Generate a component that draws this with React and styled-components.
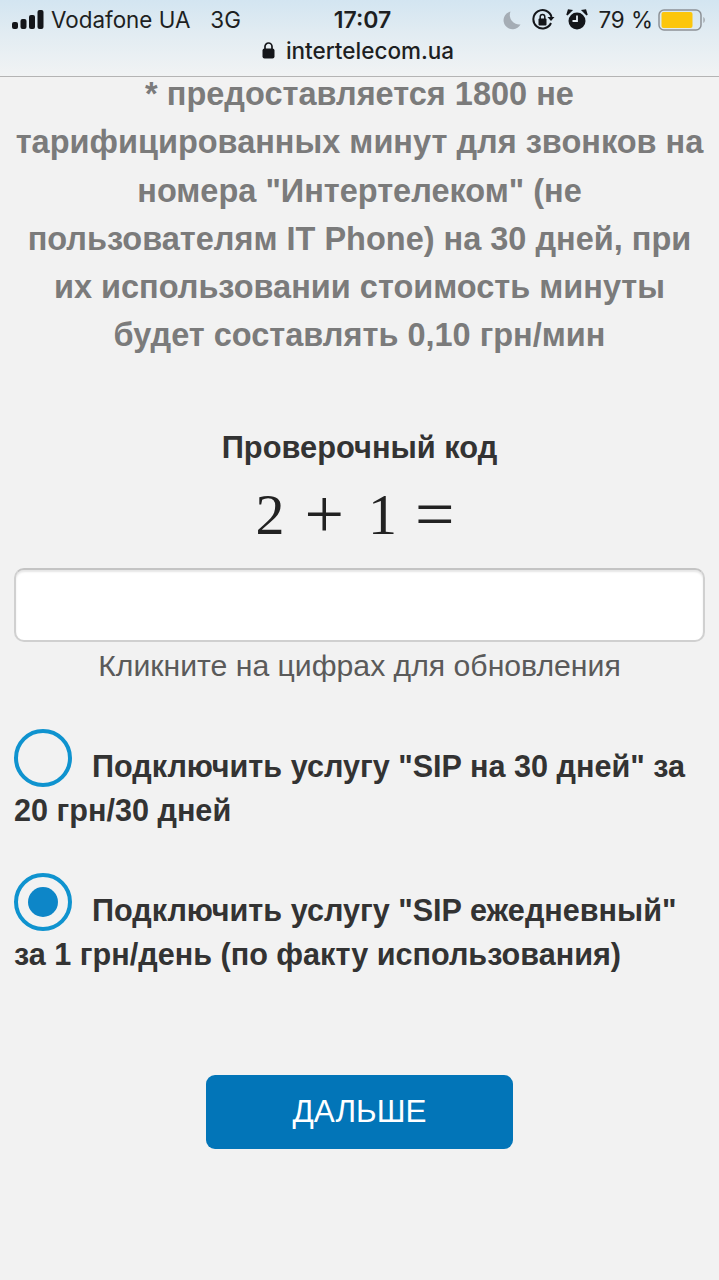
import React from 'react';
import styled, { createGlobalStyle } from 'styled-components';

const GlobalStyle = createGlobalStyle`
  html, body {
    margin: 0;
    padding: 0;
    background: #f2f2f2;
  }
  * {
    box-sizing: border-box;
  }
`;

const Page = styled.div`
  width: 719px;
  height: 1280px;
  overflow: hidden;
  background: #f2f2f2;
  font-family: "Liberation Sans", Arial, sans-serif;
`;

// Status bar + address line of the phone browser
const TopBar = styled.header`
  position: relative;
  z-index: 1;
  height: 77px;
  padding: 0 6px 0 12px;
  background: linear-gradient(180deg, #d3e5f1 0%, #e2ecf2 45%, #f1f3f4 100%);
  border-bottom: 1px solid #b4b4b4;
  font-family: "Inter", "Liberation Sans", sans-serif;
  color: #1d1f22;
`;

const StatusRow = styled.div`
  display: grid;
  grid-template-columns: 1fr auto 1fr;
  align-items: center;
  height: 39px;
`;

const StatusLeft = styled.div`
  display: flex;
  align-items: center;
  gap: 7px;
  font-size: 22.400px;
`;

const Carrier = styled.span`
  margin-right: 13px;
`;

const Clock = styled.div`
  font-size: 23px;
  font-weight: 600;
`;

const StatusRight = styled.div`
  display: flex;
  align-items: center;
  justify-content: flex-end;
  font-size: 22.400px;
  padding-right: 8px;
`;

const Percent = styled.span`
  margin: 0 5px 0 10px;
`;

const AddressRow = styled.div`
  display: flex;
  align-items: center;
  justify-content: center;
  gap: 11px;
  margin-top: -6px;
  padding-right: 9px;
  height: 34px;
  font-size: 22.500px;
  font-weight: 500;
`;

const Content = styled.main`
  padding: 0 14px;
  text-align: center;
`;

const Notice = styled.p`
  margin: -7px -2px 0;
  font-size: 32.500px;
  line-height: 48.300px;
  font-weight: 700;
  color: #7b7b7b;
`;

const CaptchaTitle = styled.h3`
  margin: 68px 0 0;
  font-size: 30.800px;
  line-height: 40px;
  font-weight: 700;
  color: #333;
`;

const CaptchaMath = styled.div`
  display: flex;
  justify-content: center;
  align-items: baseline;
  height: 60px;
  margin-top: 13px;
  padding-right: 9px;
  font-family: "Liberation Serif", serif;
  font-size: 58px;
  line-height: 60px;
  color: #222;
  cursor: pointer;
`;

// + and = are much wider than the digits in the captcha picture
const MathOperator = styled.span`
  font-size: 70px;
  line-height: 60px;
  margin: 0 ${(p) => p.$after}px 0 ${(p) => p.$before}px;
  position: relative;
  top: 4px;
`;

const CaptchaInput = styled.input`
  display: block;
  width: 100%;
  height: 74px;
  margin-top: 27px;
  background: #fff;
  border: 2px solid #d0d0d0;
  border-top-color: #c4c4c4;
  border-radius: 10px;
  box-shadow: inset 0 2px 2px rgba(0, 0, 0, 0.1);
`;

const Hint = styled.div`
  margin-top: 7px;
  font-size: 30.200px;
  line-height: 34px;
  color: #5a5a5a;
`;

const Options = styled.div`
  display: flex;
  flex-direction: column;
  gap: 40px;
  margin-top: 46px;
  text-align: left;
`;

const OptionLabel = styled.label`
  display: block;
  font-size: 30.600px;
  line-height: 44.500px;
  font-weight: 700;
  color: #333;
`;

const RadioMark = styled.span`
  display: inline-block;
  position: relative;
  width: 58px;
  height: 58px;
  margin-right: 20px;
  vertical-align: -10px;
  border: 4px solid #0f93cf;
  border-radius: 50%;

  &::after {
    content: '';
    display: ${(p) => (p.$checked ? 'block' : 'none')};
    position: absolute;
    inset: 10px;
    border-radius: 50%;
    background: #0d86c8;
  }
`;

const NextButton = styled.button`
  display: block;
  width: 307px;
  height: 74px;
  margin: 98px auto 0;
  background: #0275b8;
  border: none;
  border-radius: 9px;
  color: #fff;
  font-family: "Liberation Sans", Arial, sans-serif;
  font-size: 31.400px;
  cursor: pointer;
`;

const SignalIcon = () => (
  <svg width="32" height="20" viewBox="0 0 32 20" fill="#14161a">
    <rect x="0" y="12" width="6" height="7" rx="2" />
    <rect x="8.500" y="9" width="6" height="10" rx="2" />
    <rect x="17" y="5" width="6" height="14" rx="2" />
    <rect x="25.500" y="0" width="6" height="19" rx="2" />
  </svg>
);

const MoonIcon = () => (
  <svg width="20" height="20" viewBox="0 0 20 20" fill="#a5adb5" style={{ marginRight: 9 }}>
    <path d="M8.500 1.500 A9 9 0 1 0 18.500 14.500 A9.500 9.500 0 0 1 8.500 1.500 Z" />
  </svg>
);

const RotationLockIcon = () => (
  <svg width="24" height="24" viewBox="0 0 24 24" fill="none" stroke="#14161a" strokeWidth="2">
    <path d="M20 15 A9.200 9.200 0 1 1 20.500 9" />
    <path d="M23.500 9 L20 13 L16.500 9 Z" fill="#14161a" stroke="none" />
    <rect x="7.500" y="10.500" width="8" height="7" rx="1" fill="#14161a" stroke="none" />
    <path d="M9.200 11 V8.800 A2.300 2.300 0 0 1 13.800 8.800 V11" strokeWidth="1.500" />
  </svg>
);

const AlarmIcon = () => (
  <svg width="22" height="22" viewBox="0 0 22 22" style={{ marginLeft: 11 }}>
    <circle cx="11" cy="12" r="8.500" fill="#14161a" />
    <path d="M11 6.500 V12 H6.500" fill="none" stroke="#e6eef3" strokeWidth="1.800" />
    <path d="M1 6 L5.500 1.500 L2.500 1 Z M21 6 L16.500 1.500 L19.500 1 Z" fill="#14161a" stroke="#14161a" strokeWidth="1.500" />
  </svg>
);

const BatteryIcon = () => (
  <svg width="47" height="24" viewBox="0 0 47 24">
    <rect x="1" y="2" width="42" height="20" rx="5" fill="none" stroke="#8d9196" strokeWidth="1.500" />
    <rect x="3.500" y="4" width="31" height="16" rx="2" fill="#fcc60c" />
    <path d="M45.500 9 C47 10 47 14 45.500 15 Z" fill="#8d9196" />
  </svg>
);

const LockIcon = () => (
  <svg width="13" height="17" viewBox="0 0 13 17" fill="#14161a">
    <rect x="0.500" y="6.500" width="12" height="10" rx="2" />
    <path d="M3 7 V4.500 A3.500 3.500 0 0 1 10 4.500 V7" fill="none" stroke="#14161a" strokeWidth="1.700" />
  </svg>
);

export default function App() {
  return (
    <Page>
      <GlobalStyle />
      <TopBar>
        <StatusRow>
          <StatusLeft>
            <SignalIcon />
            <Carrier>Vodafone UA</Carrier>
            <span>3G</span>
          </StatusLeft>
          <Clock>17:07</Clock>
          <StatusRight>
            <MoonIcon />
            <RotationLockIcon />
            <AlarmIcon />
            <Percent>79 %</Percent>
            <BatteryIcon />
          </StatusRight>
        </StatusRow>
        <AddressRow>
          <LockIcon />
          <span>intertelecom.ua</span>
        </AddressRow>
      </TopBar>
      <Content>
        <Notice>
          * предоставляется 1800 не тарифицированных минут для звонков на номера "Интертелеком" (не
          пользователям IT Phone) на 30 дней, при их использовании стоимость минуты будет составлять
          0,10 грн/мин
        </Notice>
        <CaptchaTitle>Проверочный код</CaptchaTitle>
        <CaptchaMath>
          <span>2</span>
          <MathOperator $before={20} $after={24}>+</MathOperator>
          <span>1</span>
          <MathOperator $before={18} $after={0}>=</MathOperator>
        </CaptchaMath>
        <CaptchaInput type="text" />
        <Hint>Кликните на цифрах для обновления</Hint>
        <Options>
          <OptionLabel>
            <RadioMark />
            Подключить услугу "SIP на 30 дней" за 20 грн/30 дней
          </OptionLabel>
          <OptionLabel>
            <RadioMark $checked />
            Подключить услугу "SIP ежедневный" за 1 грн/день (по факту использования)
          </OptionLabel>
        </Options>
        <NextButton>ДАЛЬШЕ</NextButton>
      </Content>
    </Page>
  );
}
